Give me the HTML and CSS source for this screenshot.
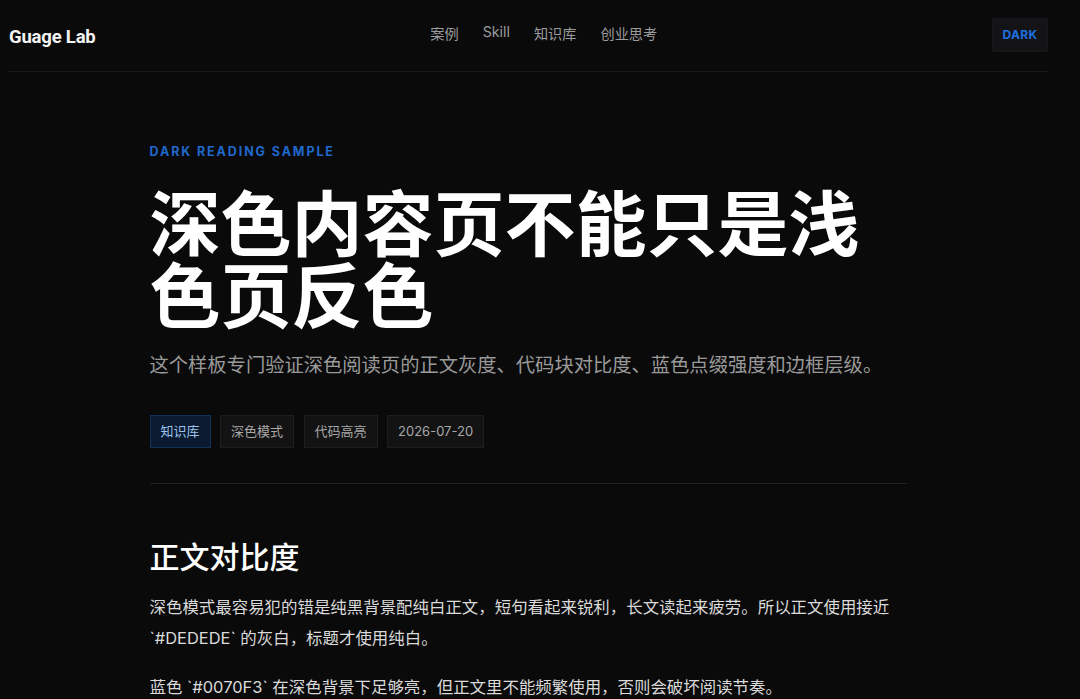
FILE: index.html
```html
<!DOCTYPE html>
<html lang="zh-CN">
<head>
<meta charset="utf-8">
<title>Guage Lab</title>
<link rel="stylesheet" href="styles.css">
</head>
<body>
<div class="page">
  <header class="site-header">
    <div class="logo">Guage Lab</div>
    <nav class="nav">
      <a class="nav-item">案例</a>
      <a class="nav-item">Skill</a>
      <a class="nav-item">知识库</a>
      <a class="nav-item">创业思考</a>
    </nav>
    <button class="mode-btn">DARK</button>
  </header>
  <main class="article">
    <div class="eyebrow">DARK READING SAMPLE</div>
    <h1 class="title">深色内容页不能只是浅色页反色</h1>
    <p class="lede">这个样板专门验证深色阅读页的正文灰度、代码块对比度、蓝色点缀强度和边框层级。</p>
    <div class="tags">
      <span class="tag tag-primary">知识库</span>
      <span class="tag">深色模式</span>
      <span class="tag">代码高亮</span>
      <span class="tag">2026-07-20</span>
    </div>
    <hr class="divider">
    <h2 class="section-title">正文对比度</h2>
    <p class="para">深色模式最容易犯的错是纯黑背景配纯白正文，短句看起来锐利，长文读起来疲劳。所以正文使用接近 `#DEDEDE` 的灰白，标题才使用纯白。</p>
    <p class="para">蓝色 `#0070F3` 在深色背景下足够亮，但正文里不能频繁使用，否则会破坏阅读节奏。</p>
  </main>
</div>
</body>
</html>
```

FILE: styles.css
```css
html, body {
  margin: 0;
  padding: 0;
  background: #0a0a0b;
  height: 100%;
  overflow: hidden;
}
body {
  font-family: "Inter", "Noto Sans CJK SC", sans-serif;
  color: #d6d6d6;
}
.page {
  width: 1056px;
}
.site-header {
  margin: 0 8px 0 8px;
  height: 72px;
  box-sizing: border-box;
  border-bottom: 1px solid #1a1a1c;
  display: flex;
  align-items: center;
  justify-content: space-between;
  padding: 0 0 0 1px;
}
.logo {
  font-family: "Roboto", "Inter", sans-serif;
  font-weight: 700;
  font-size: 18.5px;
  color: #f4f4f4;
  letter-spacing: -0.2px;
  margin-top: 2px;
}
.nav {
  display: flex;
  gap: 24px;
  font-size: 14.2px;
  margin-top: -6px;
}
.nav-item {
  color: #9c9c9c;
}
.mode-btn {
  font-family: "Inter", sans-serif;
  font-weight: 700;
  font-size: 12px;
  color: #1f6fe0;
  background: #141416;
  border: 1px solid #18181a;
  height: 34px;
  width: 56px;
  padding: 0;
  margin-top: -2px;
  letter-spacing: 0.3px;
}
.article {
  width: 757px;
  margin: 0 auto;
  padding-top: 70px;
}
.eyebrow {
  font-size: 12.5px;
  font-weight: 700;
  letter-spacing: 1.9px;
  color: #2068cc;
  line-height: 20px;
}
.title {
  margin: 26px 0 0 0;
  font-size: 71px;
  line-height: 72px;
  font-weight: 700;
  color: #ffffff;
  width: 720px;
  letter-spacing: 0;
}
.lede {
  margin: 17px 0 0 0;
  font-size: 19.3px;
  line-height: 32px;
  color: #9a9a9a;
  white-space: nowrap;
}
.tags {
  margin-top: 34px;
  display: flex;
  gap: 9.5px;
}
.tag {
  font-size: 13px;
  line-height: 17px;
  padding: 7px 10px;
  background: #131314;
  border: 1px solid #1d1d1f;
  color: #a8a8a8;
}
.tag-date {
  font-size: 12.8px;
}
.tag-primary {
  background: #0b1a2e;
  border-color: #123158;
  color: #9cc2f0;
}
.divider {
  margin: 35px 0 0 0;
  border: 0;
  border-top: 1px solid #202022;
  height: 0;
}
.section-title {
  margin: 53px 0 0 0;
  font-size: 30px;
  line-height: 40px;
  font-weight: 500;
  color: #ffffff;
}
.para {
  margin: 15px 0 0 0;
  font-size: 16.45px;
  line-height: 31px;
  color: #dadada;
}
.para + .para {
  margin-top: 18px;
}
```
